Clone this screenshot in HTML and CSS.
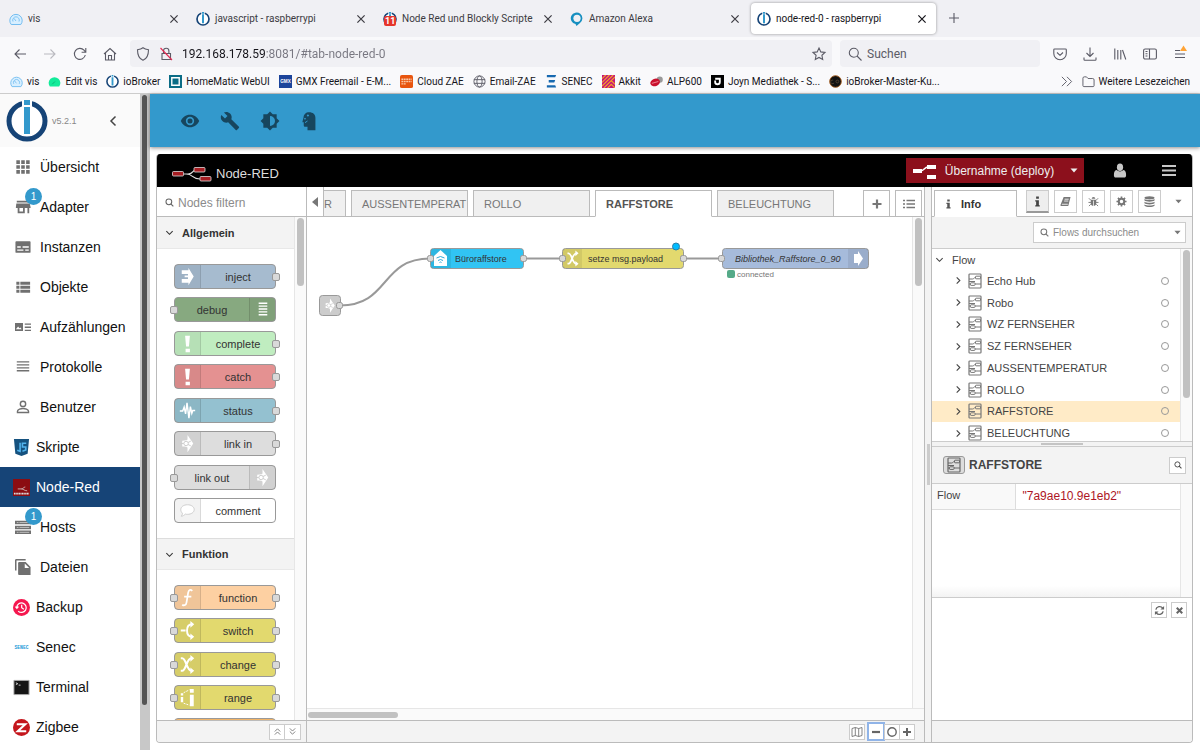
FILE: index.html
```html
<!DOCTYPE html>
<html lang="de">
<head>
<meta charset="utf-8">
<title>node-red-0 - raspberrypi</title>
<link rel="stylesheet" href="styles.css">
</head>
<body>
<svg class="defs" aria-hidden="true">
  <symbol id="x" viewBox="0 0 10 10"><path d="M2 2l6 6M8 2l-6 6" stroke="currentColor" stroke-width="1" fill="none"/></symbol>
  <symbol id="gauge" viewBox="0 0 14 14"><path d="M2.200 12.500a6.200 6.200 0 1 1 9.600 0z" fill="#d8efff" stroke="#74bdf0" stroke-width="1"/><path d="M4 9.500a3.300 3.300 0 1 1 6 0M7 9L4.800 6.200" fill="none" stroke="#74bdf0" stroke-width=".9"/></symbol>
  <symbol id="iob" viewBox="0 0 42 42"><circle cx="21" cy="21" r="18" fill="#fff" stroke="#164477" stroke-width="5"/><path d="M16 0h10v36H16z" fill="#fff"/><path d="M18 0h6v5h-6zM18 7h6v27h-6z" fill="#3399cc"/></symbol>
  <symbol id="glass" viewBox="0 0 14 14"><circle cx="6" cy="6" r="4.500" fill="none" stroke="currentColor" stroke-width="1.600"/><path d="M9 9l4 4" stroke="currentColor" stroke-width="1.800"/></symbol>
  <symbol id="chev" viewBox="0 0 10 10"><path d="M3 1.500l3.500 3.500L3 8.500" fill="none" stroke="currentColor" stroke-width="1.200"/></symbol>
  <symbol id="chevd" viewBox="0 0 10 10"><path d="M1.500 3.500L5 7l3.500-3.500" fill="none" stroke="currentColor" stroke-width="1.200"/></symbol>
  <symbol id="caret" viewBox="0 0 8 5"><path d="M.5.5h7L4 4.500z" fill="currentColor"/></symbol>
  <symbol id="flow" viewBox="0 0 14 16"><rect x="1" y="1" width="12" height="14" rx=".8" fill="none" stroke="currentColor" stroke-width="1.200"/><path d="M1 6h3.500c2 0 1-1.500 3-1.500M1 11h1.500M7 11h6M7 8.500H1" fill="none" stroke="currentColor"/><rect x="7.500" y="3.200" width="5" height="2.600" rx=".6" fill="none" stroke="currentColor"/><rect x="2.500" y="9.800" width="4.500" height="2.600" rx=".6" fill="none" stroke="currentColor"/></symbol>
  <symbol id="arrow2" viewBox="0 0 20 24"><path d="M4 5.500h7V3l5.500 9L11 21v-2.500H4v-4h6.500v-1.800H7V11h3.500V9.500H4z" fill="#fff"/></symbol>
  <symbol id="bang" viewBox="0 0 20 24"><path d="M7.500 4h5l-1 11h-3zM8 17.500h4.500V21H8z" fill="#fff"/></symbol>
  <symbol id="pulse" viewBox="0 0 20 24"><path d="M2 12.500h3l1.500-4 1.500 7L9.500 4l2 16 1.500-12 1.500 7 1-3H18" fill="none" stroke="#fff" stroke-width="1.500"/></symbol>
  <symbol id="link" viewBox="0 0 20 24"><path d="M10 3l6 9-6 9v-4.500c0-1-2-1.500-5.500-1.500V9c3.500 0 5.500-.5 5.500-1.500z" fill="#fff"/><circle cx="8.500" cy="12" r="2.300" fill="none" stroke="#ccc" stroke-width="1"/><path d="M3 12h3M10.500 11l3-1.500M10.500 13l3 1.500" stroke="#ccc" fill="none"/></symbol>
  <symbol id="lines" viewBox="0 0 20 24"><path d="M6 5.500h9M6 8.500h9M6 11.500h9M6 14.500h9M6 17.500h9" stroke="#fff" stroke-width="1.400"/></symbol>
  <symbol id="bubble" viewBox="0 0 20 24"><path d="M10 6c4 0 7 2.200 7 5s-3 5-7 5c-1 0-1.500 0-2.300-.3C6.500 17 5 18 3.500 18c.8-.9 1.300-2 1.200-3.200C3.600 13.800 3 12.500 3 11c0-2.800 3-5 7-5z" fill="#fff" stroke="#ccc"/></symbol>
  <symbol id="fx" viewBox="0 0 20 24"><path d="M15 5c-2-2-3.800-1-4.300 2L9 17c-.5 3-2.500 4-4.500 2.500M6.500 11H14" fill="none" stroke="#fff" stroke-width="1.800"/></symbol>
  <symbol id="switch" viewBox="0 0 20 24"><path d="M3 12h5M15 5.500c-4.500 0-5.500 3-5.500 6.500s1 6.500 5.500 6.500" fill="none" stroke="#fff" stroke-width="2"/><path d="M13 2l4 3.500L13 9zM13 15l4 3.500-4 3.500z" fill="#fff"/></symbol>
  <symbol id="change" viewBox="0 0 20 24"><path d="M3 5.500h1.500c4 0 4.500 13 9.500 13M3 18.500h1.500c4 0 4.500-13 9.500-13" fill="none" stroke="#fff" stroke-width="2.200"/><path d="M13 2l4 3.500L13 9zM13 15l4 3.500-4 3.500z" fill="#fff"/></symbol>
  <symbol id="range" viewBox="0 0 20 24"><path d="M3 7.500h2.500V10H3zM3 11.500h2.500V17H3zM12.500 3h4v4h-4zM12.500 9h4v12h-4z" fill="#fff"/><path d="M6 7l6-3M6 18l6 2" stroke="#fff" stroke-dasharray="2 1"/></symbol>
</svg>

<header class="browser">
  <nav class="tabstrip" aria-label="Browser-Tabs">
    <div class="btab"><svg class="fav"><use href="#gauge"/></svg><span>vis</span><button aria-label="Schließen"><svg><use href="#x"/></svg></button></div>
    <div class="btab"><svg class="fav"><use href="#iob"/></svg><span>javascript - raspberrypi</span><button aria-label="Schließen"><svg><use href="#x"/></svg></button></div>
    <div class="btab"><span class="fav counted"><svg><use href="#iob"/></svg><b>11</b></span><span>Node Red und Blockly Scripte</span><button aria-label="Schließen"><svg><use href="#x"/></svg></button></div>
    <div class="btab"><svg class="fav" viewBox="0 0 14 14"><path d="M5.500 12A5.800 5.800 0 1 1 10 11L6.500 14z" fill="#168fc0"/><circle cx="7" cy="6.300" r="3.600" fill="#f0f0f4"/></svg><span>Amazon Alexa</span><button aria-label="Schließen"><svg><use href="#x"/></svg></button></div>
    <div class="btab current"><svg class="fav"><use href="#iob"/></svg><span>node-red-0 - raspberrypi</span><button aria-label="Schließen"><svg><use href="#x"/></svg></button></div>
    <button class="newtab" aria-label="Neuer Tab"><svg viewBox="0 0 12 12"><path d="M6 1v10M1 6h10" stroke="#5b5b66" stroke-width="1.100"/></svg></button>
  </nav>
  <div class="navbar">
    <div class="navbtns">
      <button aria-label="Zurück"><svg viewBox="0 0 14 14"><path d="M13 7H2M6.500 2.500L2 7l4.500 4.500" /></svg></button>
      <button aria-label="Vor" class="dim"><svg viewBox="0 0 14 14"><path d="M1 7h11M7.500 2.500L12 7l-4.500 4.500"/></svg></button>
      <button aria-label="Neu laden"><svg viewBox="0 0 14 14"><path d="M12.300 8A5.500 5.500 0 1 1 11 3.200L12.500 5M12.800 1v4.200H8.600"/></svg></button>
      <button aria-label="Startseite"><svg viewBox="0 0 14 14"><path d="M1 7l6-5.500L13 7M2.500 6v7h9V6M5.500 13V8.500h3V13"/></svg></button>
    </div>
    <div class="urlbar">
      <svg viewBox="0 0 14 14"><path d="M7 .8C5.500 2 3.500 2.500 1.500 2.700c0 5 1.500 9 5.500 10.600 4-1.600 5.500-5.600 5.500-10.600C10.500 2.500 8.500 2 7 .8z"/></svg>
      <svg viewBox="0 0 14 14"><path d="M3 6.500h8.500v6H3zM4.500 6.500V4a2.700 2.700 0 0 1 5.400 0v2.500"/><path d="M1.500 1l11.500 12" class="red"/></svg>
      <input aria-label="Adresse" value="192.168.178.59:8081/#tab-node-red-0">
      <button aria-label="Lesezeichen"><svg viewBox="0 0 14 14"><path d="M7 1l1.800 3.900 4.200.5-3.100 2.900.8 4.200L7 10.400l-3.700 2.100.8-4.200L1 5.400l4.200-.5z"/></svg></button>
    </div>
    <label class="searchbar"><svg viewBox="0 0 14 14"><circle cx="5.800" cy="5.800" r="4.500"/><path d="M9 9l4.500 4.500"/></svg><input placeholder="Suchen" aria-label="Suchen"></label>
    <div class="navright">
      <button aria-label="Pocket"><svg viewBox="0 0 14 14"><path d="M1.500 2h11c.5 0 .8.3.8.8v3.700a6.200 6.200 0 0 1-12.500 0V2.800c0-.5.300-.8.700-.8zM4 5.500L7 8.300l3-2.800"/></svg></button>
      <button aria-label="Downloads"><svg viewBox="0 0 14 14"><path d="M7 .5v9M3.500 6L7 9.500 10.500 6M1 10.500v2c0 .5.300.8.800.8h10.400c.5 0 .8-.3.800-.8v-2"/></svg></button>
      <button aria-label="Bibliothek"><svg viewBox="0 0 14 14"><path d="M1.800 1.500v11M4.800 3v9.500M7.800 3v9.500M9.500 3l3.300 9.500"/></svg></button>
      <button aria-label="Seitenleiste"><svg viewBox="0 0 14 14"><rect x=".6" y="2" width="12.800" height="10" rx="1.500"/><path d="M6.500 2v10M2.500 4.500h2M2.500 6.800h2M2.500 9h2"/></svg></button>
      <button aria-label="Menü"><svg viewBox="0 0 14 14"><path d="M2 3.500h5M2 7h10M2 10.500h10"/><path d="M10.500-1.500L14 4H7z" fill="#ffa436" stroke="none"/></svg></button>
    </div>
  </div>
  <nav class="bookmarks" aria-label="Lesezeichen">
    <a href="#"><svg><use href="#gauge"/></svg>vis</a>
    <a href="#"><svg viewBox="0 0 14 14"><path d="M2 12.500A6.300 6.300 0 1 1 12 12.500z" fill="#12eb9a"/><path d="M4.500 10l3-3" stroke="#0caf77"/></svg>Edit vis</a>
    <a href="#"><svg><use href="#iob"/></svg>ioBroker</a>
    <a href="#"><svg viewBox="0 0 14 14"><path d="M0 0h14v14H0z" fill="#0b6c86"/><path d="M3 3h8v8H3z" fill="#0b6c86" stroke="#fff" stroke-width="1.500"/></svg>HomeMatic WebUI</a>
    <a href="#"><svg viewBox="0 0 14 14"><path d="M0 0h14v14H0z" fill="#1c449b"/><text x="7" y="9" text-anchor="middle" class="fav-gmx">GMX</text></svg>GMX Freemail - E-M...</a>
    <a href="#"><svg viewBox="0 0 14 14"><rect width="14" height="14" rx="2" fill="#e8550f"/><path d="M1.500 4.500h11M1.500 7h11M1.500 9.500h5" stroke="#f9c9a8" stroke-width="1.500" stroke-dasharray="2 .6"/></svg>Cloud ZAE</a>
    <a href="#"><svg viewBox="0 0 14 14" class="line"><circle cx="7" cy="7" r="6"/><ellipse cx="7" cy="7" rx="2.800" ry="6"/><path d="M1 5h12M1 9h12"/></svg>Email-ZAE</a>
    <a href="#"><svg viewBox="0 0 14 14"><path d="M2 0h10l-1 2.500H2zM4 5.500h7L10 8H4zM2 11h9l1 2.500H2z" fill="#1769b0"/></svg>SENEC</a>
    <a href="#"><svg viewBox="0 0 14 14"><path d="M0 0h14v14H0z" fill="#c4157d"/><path d="M0 4l4-4M0 8l8-8M0 12l12-12M2 14L14 2M6 14l4-4 4 4M10 6l4 4" stroke="#f5a623" stroke-width="1.200" fill="none"/></svg>Akkit</a>
    <a href="#"><svg viewBox="0 0 14 14"><circle cx="10.500" cy="5" r="3.300" fill="#999"/><ellipse cx="5.500" cy="8" rx="5.300" ry="4" fill="#c9102d" transform="rotate(-20 5.500 8)"/><path d="M2 9l7-2" stroke="#f08b98"/></svg>ALP600</a>
    <a href="#"><svg viewBox="0 0 14 14"><path d="M0 0h14v14H0z" fill="#000"/><path d="M4.500 4h5v3.500a2.500 2.500 0 0 1-5 0V6" fill="none" stroke="#fff" stroke-width="2"/></svg>Joyn Mediathek - S...</a>
    <a href="#"><svg viewBox="0 0 14 14"><circle cx="7" cy="7" r="6.300" fill="#111" stroke="#a65f22"/><path d="M4.500 5.500a2 2 0 1 0 1 3M7.500 7a1.500 1.500 0 1 0 3 0 1.500 1.500 0 1 0-3 0" stroke="#51402f" fill="none"/></svg>ioBroker-Master-Ku...</a>
    <button class="more" aria-label="Weitere"><svg viewBox="0 0 14 14" class="line"><path d="M2 2l5 5-5 5M7.500 2l5 5-5 5"/></svg></button>
    <a href="#"><svg viewBox="0 0 14 14" class="line"><path d="M1 11.500v-8c0-1 .5-1.500 1.500-1.500h2.300l1.700 1.800h5c1 0 1.500.5 1.500 1.500v6.200c0 .6-.4 1-1 1H2c-.6 0-1-.4-1-1z"/></svg>Weitere Lesezeichen</a>
  </nav>
</header>

<div class="app">
  <aside class="side">
    <div class="side-head"><svg class="logo"><use href="#iob"/></svg><span>v5.2.1</span><button aria-label="Einklappen"><svg viewBox="0 0 10 12"><path d="M7.500 1.500L3 6l4.500 4.500" fill="none" stroke="#444" stroke-width="1.500"/></svg></button></div>
    <nav class="menu">
      <a href="#"><svg viewBox="0 0 18 18"><path d="M1.500 1.500h4v4h-4zM7 1.500h4v4H7zM12.500 1.500h4v4h-4zM1.500 7h4v4h-4zM7 7h4v4H7zM12.500 7h4v4h-4zM1.500 12.500h4v4h-4zM7 12.500h4v4H7zM12.500 12.500h4v4h-4z"/></svg>Übersicht</a>
      <a href="#"><svg viewBox="0 0 18 18"><path d="M2 2h14v2H2zM1.500 5h15l1 4v1H16v6h-2v-6h-3v6H3v-6H1V9zM5 10v4h4v-4z" fill-rule="evenodd"/></svg>Adapter<b class="badge">1</b></a>
      <a href="#"><svg viewBox="0 0 18 18"><path d="M1.500 2.500h15c.6 0 1 .4 1 1v11c0 .6-.4 1-1 1h-15c-.6 0-1-.4-1-1v-11c0-.6.4-1 1-1z"/><path d="M2.500 9h4M8.500 9h7M2.500 12.500h7M11.500 12.500h4" stroke="#fff" stroke-width="1.500"/></svg>Instanzen</a>
      <a href="#"><svg viewBox="0 0 18 18"><path d="M1.500 3h3.500v3.500H1.500zM6 3h11v3.500H6zM1.500 7.500h3.500v3.500H1.500zM6 7.500h11v3.500H6zM1.500 12h3.500v3.500H1.500zM6 12h11v3.500H6z"/></svg>Objekte</a>
      <a href="#"><svg viewBox="0 0 18 18"><path d="M0 4.500h9v9H0z"/><path d="M1 11.500l2.500-3 1.500 2 1-1 1.500 2z" fill="#fff"/><path d="M11 5h7v1.500h-7zM11 8.500h7V10h-7zM11 12h7v1.500h-7z"/></svg>Aufzählungen</a>
      <a href="#"><svg viewBox="0 0 18 18"><path d="M2 2.500h14V4H2zM2 5.800h14v1.500H2zM2 9.200h14v1.500H2zM2 12.500h14V14H2z"/></svg>Protokolle</a>
      <a href="#"><svg viewBox="0 0 18 18"><circle cx="9" cy="5.500" r="3" fill="none" stroke="#707070" stroke-width="1.600"/><path d="M2.800 15.200v-1.500c0-2 4-3 6.200-3s6.200 1 6.200 3v1.500z" fill="none" stroke="#707070" stroke-width="1.600"/></svg>Benutzer</a>
      <a href="#" class="adapter"><svg viewBox="0 0 18 18"><path d="M1 0h16l-1.500 15.500L9 18l-6.500-2.500z" fill="#15527f"/><path d="M7.500 4v9l-3-1.200M14 4.500h-4v4h3.500v3.200L10 13" fill="none" stroke="#52b3ec" stroke-width="1.700"/></svg>Skripte</a>
      <a href="#" class="adapter active"><svg viewBox="0 0 18 18"><path d="M0 0h18v18H0z" fill="#8b0d12"/><path d="M5 10.500h4c2 0 2-2 4-2M9 10.500c2 0 3 2 6 2" stroke="#ddd" fill="none" stroke-width=".8"/><path d="M1 15.500h16" stroke="#ddd" stroke-width="2" stroke-dasharray="1.300 .4"/></svg>Node-Red</a>
      <a href="#"><svg viewBox="0 0 18 18"><path d="M0 2h18v4H0zM0 7.500h18v4H0zM0 13h18v4H0z"/><path d="M2 4h2M2 9.500h2M2 15h2M5 4h11M5 9.500h11M5 15h11" stroke="#ddd" stroke-width=".8"/></svg>Hosts<b class="badge">1</b></a>
      <a href="#"><svg viewBox="0 0 18 18"><path d="M0 1.500C0 .7.700 0 1.500 0H12v1.700H1.700V13H0z"/><path d="M5 3.500h7l5.500 5.500v9H5c-1 0-1.500-.6-1.500-1.500V5c0-.9.600-1.500 1.500-1.500z"/><path d="M11 5v5h5z" fill="#fff"/></svg>Dateien</a>
      <a href="#" class="adapter"><svg viewBox="0 0 18 18"><circle cx="9" cy="9" r="9" fill="#f5184f"/><path d="M4 9a5 5 0 1 1 1.500 3.800M9.200 6v3.300l2.300 1.500M2.600 8l1.500 1.800L5.800 8" fill="none" stroke="#fff" stroke-width="1.300"/></svg>Backup</a>
      <a href="#" class="adapter"><svg viewBox="0 0 18 18"><text x="9" y="11" text-anchor="middle" class="fav-senec">SENEC</text></svg>Senec</a>
      <a href="#" class="adapter"><svg viewBox="0 0 18 18"><path d="M1 1.500h16v15H1z" fill="#151515" stroke="#aaa" stroke-width="1"/><path d="M3 4l2 1-2 1M6 6.500h2" stroke="#fff" fill="none" stroke-width=".8"/></svg>Terminal</a>
      <a href="#" class="adapter"><svg viewBox="0 0 18 18"><circle cx="9" cy="9" r="9" fill="#c4161c"/><path d="M4 5.500h9l-8 7.500h9" fill="none" stroke="#fff" stroke-width="2.200"/></svg>Zigbee</a>
    </nav>
  </aside>
  <div class="track"><i></i></div>
  <main>
    <div class="toolbar">
      <button aria-label="Ansicht"><svg viewBox="0 0 24 24"><path d="M12 4.500C7 4.500 2.700 7.600 1 12c1.700 4.400 6 7.500 11 7.500s9.300-3.100 11-7.500c-1.700-4.400-6-7.500-11-7.500zM12 17a5 5 0 1 1 0-10 5 5 0 0 1 0 10zm0-8a3 3 0 1 0 0 6 3 3 0 0 0 0-6z"/></svg></button>
      <button aria-label="Einstellungen"><svg viewBox="0 0 24 24"><path d="M22.700 19l-9.100-9.100c.9-2.300.4-5-1.500-6.900-2-2-5-2.400-7.400-1.300L9 6 6 9 1.600 4.700C.4 7.100.900 10.100 2.900 12.100c1.900 1.900 4.600 2.400 6.900 1.500l9.100 9.100c.4.400 1 .4 1.400 0l2.300-2.300c.5-.4.5-1.100.1-1.400z"/></svg></button>
      <button aria-label="Farbschema"><svg viewBox="0 0 24 24"><path d="M20 15.300L23.300 12 20 8.700V4h-4.700L12 .7 8.700 4H4v4.700L.7 12 4 15.300V20h4.700l3.300 3.300 3.300-3.300H20zM12 18V6a6 6 0 1 1 0 12z"/></svg></button>
      <button aria-label="Experte"><svg viewBox="0 0 24 24"><path d="M11 1.500c-4 0-6.500 2.500-6.700 6L3 12.500c-.2.700 0 1 .7 1h.8V17c0 1.200.6 2 1.800 2H9v4h9.500V8c0-4-3-6.500-7.500-6.500z"/><path d="M9.500 4l1.500 1.500L9.500 7 8 5.500zM6 8l1.300 1.300L6 10.600 4.700 9.300z" fill="#39c"/><path d="M6 14l3-2" stroke="#39c" stroke-width="1.200"/></svg></button>
    </div>
    <div class="frame">
    <section class="editor">
      <header class="nr-head">
        <svg class="nr-logo" viewBox="0 0 40 16"><path d="M12 8h4c6 0 4-4 8-4M14 8c8 0 5 5 14 5" fill="none" stroke="#ddd" stroke-width="1.200"/><g fill="#a61d22" stroke="#ddd" stroke-width=".8"><rect x=".5" y="5.500" width="11" height="4.500" rx="1"/><rect x="22" y="1.500" width="11" height="4.500" rx="1"/><rect x="28" y="10.500" width="11" height="4.500" rx="1"/></g></svg>
        <span class="nr-name">Node-RED</span>
        <button class="deploy"><svg viewBox="0 0 24 16"><path d="M8 8c5 0 4-4 8-4" fill="none" stroke="#fff" stroke-width="1.500"/><path d="M1 6h9v4H1zM15 2h9v4h-9zM15 12h9v4h-9z" fill="#fff"/></svg><span>Übernahme (deploy)</span><svg class="car"><use href="#caret"/></svg></button>
        <button class="hbtn" aria-label="Benutzer"><svg viewBox="0 0 14 16"><ellipse cx="7" cy="4.500" rx="3.300" ry="4"/><path d="M3.500 7.500C5 9.500 9 9.500 10.500 7.500 13 8 13.500 10 13.500 13c0 1.500-.8 2.500-2 2.500h-9c-1.200 0-2-1-2-2.500 0-3 .5-5 3-5.500z"/></svg></button>
        <button class="hbtn" aria-label="Menü"><svg viewBox="0 0 14 14"><path d="M0 1.500h14v2H0zM0 6h14v2H0zM0 10.500h14v2H0z"/></svg></button>
      </header>
      <div class="panes">
        <section class="palette">
          <label class="filter"><svg><use href="#glass"/></svg><input placeholder="Nodes filtern" aria-label="Nodes filtern"></label>
          <div class="pal-scroll">
            <div class="pal-body">
              <button class="cat"><svg><use href="#chevd"/></svg>Allgemein</button>
              <div class="nodes eight">
                <div class="node c-inject"><svg><use href="#arrow2"/></svg><span>inject</span><i class="out"></i></div>
                <div class="node flip c-debug"><svg><use href="#lines"/></svg><span>debug</span><i class="in"></i></div>
                <div class="node c-complete"><svg><use href="#bang"/></svg><span>complete</span><i class="out"></i></div>
                <div class="node c-catch"><svg><use href="#bang"/></svg><span>catch</span><i class="out"></i></div>
                <div class="node c-status"><svg><use href="#pulse"/></svg><span>status</span><i class="out"></i></div>
                <div class="node c-link"><svg><use href="#link"/></svg><span>link in</span><i class="out"></i></div>
                <div class="node flip c-link"><svg><use href="#link"/></svg><span>link out</span><i class="in"></i></div>
                <div class="node c-comment"><svg><use href="#bubble"/></svg><span>comment</span></div>
              </div>
              <button class="cat second"><svg><use href="#chevd"/></svg>Funktion</button>
              <div class="nodes five">
                <div class="node c-function"><svg><use href="#fx"/></svg><span>function</span><i class="in"></i><i class="out"></i></div>
                <div class="node c-yellow"><svg><use href="#switch"/></svg><span>switch</span><i class="in"></i><i class="out"></i></div>
                <div class="node c-yellow"><svg><use href="#change"/></svg><span>change</span><i class="in"></i><i class="out"></i></div>
                <div class="node c-yellow"><svg><use href="#range"/></svg><span>range</span><i class="in"></i><i class="out"></i></div>
                <div class="node c-template"></div>
              </div>
            </div>
            <div class="vbar"><i class="short"></i></div>
          </div>
          <footer class="pfoot"><button aria-label="Alle einklappen"><svg viewBox="0 0 10 10"><path d="M2 5l3-3 3 3M2 8.500l3-3 3 3"/></svg></button><button aria-label="Alle ausklappen"><svg viewBox="0 0 10 10"><path d="M2 1.500l3 3 3-3M2 5l3 3 3-3"/></svg></button></footer>
        </section>
        <section class="work">
          <div class="wtabs">
            <button class="scroll" aria-label="Zurück"><svg viewBox="0 0 8 12"><path d="M7 1v10L1 6z" fill="#777"/></svg></button>
            <div class="strip">
              <button class="wtab part">R</button><button class="wtab">AUSSENTEMPERAT</button><button class="wtab">ROLLO</button><button class="wtab on">RAFFSTORE</button><button class="wtab">BELEUCHTUNG</button>
            </div>
            <button class="wbtn" aria-label="Hinzufügen"><svg viewBox="0 0 10 10"><path d="M5 .5v9M.5 5h9" stroke="#777" stroke-width="2.200"/></svg></button>
            <button class="wbtn" aria-label="Liste"><svg viewBox="0 0 12 10" class="wide"><path d="M0 1.500h2M0 5h2M0 8.500h2M3.500 1.500H12M3.500 5H12M3.500 8.500H12" stroke="#777" stroke-width="1.500"/></svg></button>
          </div>
          <div class="stage">
            <svg class="canvas" aria-label="Flow">
              <g fill="none" stroke="#999" stroke-width="2"><path d="M33 88.500C83 88.500 73 41.500 123 41.500M217 41.500H256M377 41.500H415"/></g>
              <g stroke="#999">
                <rect x="12.500" y="78.500" width="21" height="20" rx="3" fill="#ccc"/>
                <rect x="123.500" y="31.500" width="93" height="20" rx="3" fill="#31c4f3"/>
                <rect x="255.500" y="31.500" width="121" height="20" rx="3" fill="#e2d96e"/>
                <rect x="415.500" y="31.500" width="146" height="20" rx="3" fill="#a6bbdb"/>
              </g>
              <path d="M124 32h20v19h-20zM256 32h19v19h-19zM541 32h20v19h-20z" fill="#000" fill-opacity=".07"/>
              <use href="#link" x="14" y="79" width="18" height="19"/>
              <path d="M127 39l6.500-6 6.500 6v10h-13z" fill="#fff"/><path d="M129.500 41q4-3 8 0M131 43.500q2.500-2 5 0M132.500 45.500q1-1 2 0" fill="none" stroke="#31a9d8"/>
              <use href="#change" x="256" y="32" width="20" height="19"/>
              <path d="M547 37h4v-3l5 7.500-5 7.500v-3h-4z" fill="#fff"/>
              <g fill="#d9d9d9" stroke="#999"><rect x="29.500" y="85.500" width="6" height="6" rx="2"/><rect x="120.500" y="38.500" width="6" height="6" rx="2"/><rect x="213.500" y="38.500" width="6" height="6" rx="2"/><rect x="252.500" y="38.500" width="6" height="6" rx="2"/><rect x="373.500" y="38.500" width="6" height="6" rx="2"/><rect x="411.500" y="38.500" width="6" height="6" rx="2"/></g>
              <circle cx="369" cy="29.500" r="3.500" fill="#00bcff" stroke="#2a7fa8"/>
              <rect x="420" y="53" width="8" height="8" rx="2" fill="#5a8"/>
              <g class="nlabel"><text x="148" y="45">Büroraffstore</text><text x="281" y="45">setze msg.payload</text><text x="428" y="45" class="it">Bibliothek_Raffstore_0_90</text></g>
              <text x="430" y="60" class="nstatus">connected</text>
            </svg>
            <div class="vbar"><i class="short"></i></div>
            <div class="hbar"><i></i></div>
          </div>
          <footer class="wfoot">
            <button aria-label="Navigator"><svg viewBox="0 0 12 12"><path d="M1 2.500l3.300-1 3.400 1 3.300-1v8l-3.300 1-3.400-1-3.300 1zM4.300 1.500v8M7.700 2.500v8"/></svg></button>
            <span class="zooms"><button class="focus" aria-label="Verkleinern"><svg viewBox="0 0 12 12"><path d="M2 6h8" stroke-width="2.200"/></svg></button><button aria-label="Zurücksetzen"><svg viewBox="0 0 12 12"><circle cx="6" cy="6" r="4.200" stroke-width="1.400"/></svg></button><button aria-label="Vergrößern"><svg viewBox="0 0 12 12"><path d="M2 6h8M6 2v8" stroke-width="2"/></svg></button></span>
          </footer>
        </section>
        <div class="sep"><i></i></div>
        <aside class="info">
          <div class="itabs">
            <button class="itab"><svg viewBox="0 0 8 12"><path d="M2.500.5h3v2.500h-3zM1.500 4.500h4V10h1v1.500h-5V10h1V6h-1z" fill="#555"/></svg>Info</button>
            <button class="ib sel" aria-label="Info"><svg viewBox="-2 0 12 12"><path d="M2.500.5h3v2.500h-3zM1.500 4.500h4V10h1v1.500h-5V10h1V6h-1z"/></svg></button>
            <button class="ib" aria-label="Hilfe"><svg viewBox="0 0 12 12"><path d="M4 1h7.500L9 11H1.500c-1 0-1.200-1-.8-1.800z"/><path d="M5 3.500h4.500M4.500 5.500H9M2 9h6.500" stroke="#fff" stroke-width=".9"/></svg></button>
            <button class="ib" aria-label="Debug"><svg viewBox="0 0 12 12"><path d="M4 3a2 2 0 0 1 4 0zM3 4h6v4c0 2-1.500 3-3 3s-3-1-3-3z"/><path d="M1 2.500l2 2M11 2.500l-2 2M.5 7h3M11.500 7h-3M1 11l2-2M11 11L9 9" stroke="#777"/><path d="M6 5v6" stroke="#fff" stroke-width=".8"/></svg></button>
            <button class="ib" aria-label="Konfiguration"><svg viewBox="0 0 12 12"><circle cx="6" cy="6" r="3" fill="none" stroke="#777" stroke-width="2.200"/><path d="M6 .5v2M6 9.500v2M.5 6h2M9.500 6h2M2.100 2.100l1.500 1.500M8.400 8.400l1.500 1.500M9.900 2.100L8.400 3.600M3.600 8.400L2.100 9.900" stroke="#777" stroke-width="1.800"/></svg></button>
            <button class="ib" aria-label="Kontext"><svg viewBox="0 0 12 12"><ellipse cx="6" cy="2" rx="5.500" ry="1.800"/><path d="M.5 3.200c2 1.600 9 1.600 11 0v1.800c-2 1.600-9 1.600-11 0zM.5 6.200c2 1.600 9 1.600 11 0V8c-2 1.600-9 1.600-11 0zM.5 9.200c2 1.600 9 1.600 11 0v1.300c-2 1.900-9 1.900-11 0z"/></svg></button>
            <button class="more" aria-label="Mehr"><svg><use href="#caret"/></svg></button>
          </div>
          <div class="isearch"><label><svg><use href="#glass"/></svg><input placeholder="Flows durchsuchen" aria-label="Flows durchsuchen"><svg class="car"><use href="#caret"/></svg></label></div>
          <div class="tree-wrap">
            <div class="tree">
              <div class="root"><svg class="ch"><use href="#chevd"/></svg>Flow</div>
              <div class="rows">
                <div><svg class="ch"><use href="#chev"/></svg><svg class="fl"><use href="#flow"/></svg><span>Echo Hub</span><i></i></div>
                <div><svg class="ch"><use href="#chev"/></svg><svg class="fl"><use href="#flow"/></svg><span>Robo</span><i></i></div>
                <div><svg class="ch"><use href="#chev"/></svg><svg class="fl"><use href="#flow"/></svg><span>WZ FERNSEHER</span><i></i></div>
                <div><svg class="ch"><use href="#chev"/></svg><svg class="fl"><use href="#flow"/></svg><span>SZ FERNSEHER</span><i></i></div>
                <div><svg class="ch"><use href="#chev"/></svg><svg class="fl"><use href="#flow"/></svg><span>AUSSENTEMPERATUR</span><i></i></div>
                <div><svg class="ch"><use href="#chev"/></svg><svg class="fl"><use href="#flow"/></svg><span>ROLLO</span><i></i></div>
                <div class="hit"><svg class="ch"><use href="#chev"/></svg><svg class="fl"><use href="#flow"/></svg><span>RAFFSTORE</span><i></i></div>
                <div><svg class="ch"><use href="#chev"/></svg><svg class="fl"><use href="#flow"/></svg><span>BELEUCHTUNG</span><i></i></div>
              </div>
            </div>
            <div class="vbar"><i></i></div>
          </div>
          <div class="hsep"><i></i></div>
          <div class="ihead"><span class="ficon"><svg><use href="#flow"/></svg></span><b>RAFFSTORE</b><button aria-label="Suchen"><svg><use href="#glass"/></svg></button></div>
          <div class="props"><table><tbody><tr><th scope="row">Flow</th><td>"7a9ae10.9e1eb2"</td></tr></tbody></table><div class="vbar"></div></div>
          <div class="tips"><button aria-label="Neu laden"><svg viewBox="0 0 12 12"><path d="M2 5a4.200 4.200 0 0 1 7.500-1.500M10 7a4.200 4.200 0 0 1-7.500 1.500" fill="none" stroke="#666" stroke-width="1.500"/><path d="M11 1v4H7zM1 11V7h4z" fill="#666"/></svg></button><button aria-label="Schließen"><svg viewBox="0 0 12 12"><path d="M3 3l6 6M9 3l-6 6" stroke="#666" stroke-width="2.200"/></svg></button></div>
          <footer class="ifoot"></footer>
        </aside>
      </div>
    </section>
    </div>
  </main>
</div>
</body>
</html>
```
FILE: styles.css
```css
* { box-sizing: border-box; }
html, body { height: 100%; }
body { margin: 0; display: flex; flex-direction: column; overflow: hidden; background: #fff; font-family: "Liberation Sans", Arial, sans-serif; font-size: 11px; color: #444; }
button { border: 0; padding: 0; margin: 0; background: none; font: inherit; color: inherit; display: flex; align-items: center; justify-content: center; }
input { border: 0; padding: 0; margin: 0; background: none; font: inherit; color: inherit; outline: 0; min-width: 0; }
a { color: inherit; text-decoration: none; }
svg { flex: none; display: block; }
.defs { position: absolute; width: 0; height: 0; }

/* browser chrome */
.browser { flex: none; font-family: Roboto, sans-serif; font-size: 10px; color: #15141a; background: #f9f9fb; border-bottom: 1px solid #ccc; }
.tabstrip { display: flex; gap: 2px; height: 37px; padding: 3px 3px 4px; background: #f0f0f4; }
.btab { display: flex; align-items: center; gap: 5px; width: 185px; height: 31px; padding: 0 8px 0 6px; border-radius: 4px; color: #3c3b42; white-space: nowrap; }
.btab.current { background: #fff; box-shadow: 0 0 3px rgba(0,0,0,.4); color: #15141a; }
.btab .fav { width: 14px; height: 14px; }
.btab > span:not(.fav) { flex: 1; }
.btab button svg { width: 12px; height: 12px; }
.counted { position: relative; }
.counted svg { width: 14px; height: 14px; }
.counted b { position: absolute; left: 1px; top: 4px; padding: 0 1px; border-radius: 2px; background: #e5352b; color: #fff; font-size: 9px; line-height: 10px; }
.newtab { width: 32px; }
.newtab svg { width: 12px; height: 12px; }
.navbar { display: flex; align-items: center; height: 33px; padding-right: 10px; }
.navbar svg { width: 14px; height: 14px; fill: none; stroke: #5b5b66; stroke-width: 1.1; overflow: visible; }
.navbtns { display: flex; gap: 16px; width: 130px; padding-left: 13px; }
.dim { opacity: .4; }
.urlbar { display: flex; align-items: center; gap: 9px; flex: 1; height: 27px; padding: 0 6px; border-radius: 4px; background: #f0f0f4; }
.urlbar .red { stroke: #e22850; }
.urlbar input { flex: 1; font-size: 12px; color: transparent; background: linear-gradient(90deg, #15141a 83px, #777680 83px); -webkit-background-clip: text; background-clip: text; }
.searchbar { display: flex; align-items: center; gap: 5px; width: 200px; height: 27px; margin: 0 13px 0 8px; padding-left: 8px; border-radius: 4px; background: #f0f0f4; font-size: 12px; }
.searchbar input::placeholder { color: #5b5b66; opacity: 1; }
.navright { display: flex; gap: 16px; padding-right: 3px; }
.bookmarks { display: flex; align-items: center; gap: 9px; height: 23px; padding: 0 10px; white-space: nowrap; }
.bookmarks a { display: flex; align-items: center; gap: 4px; }
.bookmarks svg { width: 13px; height: 13px; }
.bookmarks .line { fill: none; stroke: #5b5b66; }
.bookmarks .more { margin-left: auto; }
.fav-gmx { font: bold 5px "Liberation Sans", Arial, sans-serif; fill: #fff; }
.fav-senec { font: bold 5px "Liberation Mono", monospace; fill: #1d9bd8; }

/* application frame */
.app { display: flex; flex: 1; min-height: 0; }
.side { width: 140px; flex: none; display: flex; flex-direction: column; overflow: hidden; }
.side-head { display: flex; align-items: center; gap: 4px; height: 53px; flex: none; padding: 0 22px 0 6px; background: #fafafa; color: #888; font-size: 9px; }
.logo { width: 42px; height: 42px; }
.side-head button { margin-left: auto; }
.side-head button svg { width: 10px; height: 12px; }
.menu a { position: relative; display: flex; align-items: center; gap: 9px; height: 40px; padding-left: 15px; font-size: 14px; color: #111; }
.menu svg { width: 16px; height: 16px; fill: #707070; }
.menu .adapter { padding-left: 13px; gap: 6px; }
.menu .adapter svg { width: 17px; height: 17px; }
.menu .active { background: #164477; color: #fff; }
.badge { position: absolute; left: 25px; top: 1px; width: 17px; height: 17px; border-radius: 9px; background: #39c; color: #fff; font-size: 10px; font-weight: normal; line-height: 17px; text-align: center; }
.track { width: 10px; flex: none; background: #c8c8c8; padding: 1px 3px 0 2px; }
.track i { display: block; width: 5px; height: 610px; border-radius: 3px; background: #555; }
main { flex: 1; min-width: 0; display: flex; flex-direction: column; }
.toolbar { display: flex; align-items: center; gap: 20px; height: 53px; flex: none; padding-left: 30px; background: #39c; box-shadow: 0 1px 4px rgba(0,0,0,.45); }
.toolbar svg { width: 20px; height: 20px; fill: #17465e; }
.frame { flex: 1; min-height: 0; padding: 7px 7px 7px 6px; display: flex; }

/* Node-RED editor */
.editor { flex: 1; min-width: 0; display: flex; flex-direction: column; border: 1px solid #bbb; border-top: 0; border-radius: 4px; overflow: hidden; }
.nr-head { display: flex; align-items: center; height: 33px; flex: none; padding: 0 16px 0 15px; background: #000; color: #ddd; }
.nr-logo { width: 40px; height: 16px; margin-top: 6px; }
.nr-name { margin: 6px auto 0 4px; font-size: 13px; }
.deploy { gap: 9px; width: 178px; height: 25px; background: #8c101c; color: #eee; font-size: 12px; }
.deploy svg { width: 24px; height: 16px; }
.deploy .car { width: 8px; height: 5px; margin-left: 7px; }
.hbtn { margin-left: 29px; }
.hbtn svg { width: 14px; height: 15px; fill: #c7c7c7; }
.hbtn + .hbtn { margin-left: 35px; }
.panes { flex: 1; min-height: 0; display: flex; }
.vbar { width: 12px; flex: none; padding: 1px 2px; background: #fafafa; border-left: 1px solid #e6e6e6; }
.vbar i { display: block; width: 7px; height: 148px; border-radius: 4px; background: #c1c1c1; }
.vbar .short { height: 68px; }
.palette { width: 150px; flex: none; display: flex; flex-direction: column; border-right: 1px solid #bbb; }
.filter { display: flex; align-items: center; gap: 4px; height: 30px; flex: none; padding: 2px 0 0 8px; border-bottom: 1px solid #bbb; font-size: 12px; color: #666; }
.filter svg { width: 9px; height: 9px; }
input::placeholder { color: #8b8b8b; opacity: 1; }
.filter input { width: 120px; }
.pal-scroll { flex: 1; min-height: 0; display: flex; overflow: hidden; }
.pal-body { flex: 1; overflow: hidden; }
.cat { width: 100%; height: 32px; justify-content: flex-start; gap: 8px; padding-left: 8px; background: #f3f3f3; border-bottom: 1px solid #e8e8e8; color: #333; font-weight: bold; }
.cat svg { width: 9px; height: 9px; }
.cat.second { border-top: 1px solid #ddd; }
.nodes { display: flex; flex-direction: column; justify-content: space-between; padding-left: 17px; margin: 15px 0; }
.eight { height: 259px; }
.five { height: 158px; }
.node { position: relative; display: flex; width: 102px; height: 25px; flex: none; border: 1px solid #999; border-radius: 4px; color: #333; }
.node svg { width: 26px; height: 23px; padding: 0 2px; background: rgba(0,0,0,.05); border-right: 1px solid rgba(0,0,0,.1); }
.node span { flex: 1; text-align: center; line-height: 24px; }
.node.flip { flex-direction: row-reverse; }
.flip svg { border-right: 0; border-left: 1px solid rgba(0,0,0,.1); }
.node i { position: absolute; top: 8px; width: 8px; height: 8px; border: 1px solid #999; border-radius: 2px; background: #d9d9d9; }
.node .in { left: -5px; }
.node .out { right: -5px; }
.c-inject { background: #a6bbcf; }
.c-debug { background: #87a980; }
.c-complete { background: #c0edc0; }
.c-catch { background: #e49191; }
.c-status { background: #94c1d0; }
.c-link { background: #ddd; }
.c-comment { background: #fff; }
.c-function { background: #fdd0a2; }
.c-yellow { background: #e2d96e; }
.c-template { background: #f3b567; }
.pfoot, .wfoot, .ifoot { height: 22px; flex: none; display: flex; align-items: center; justify-content: flex-end; background: #f3f3f3; border-top: 1px solid #bbb; }
.pfoot { padding-right: 5px; }
.pfoot button, .wfoot button { width: 16px; height: 16px; border: 1px solid #ccc; background: #fff; }
.pfoot button + button { border-left: 0; }
.pfoot svg { width: 9px; height: 9px; fill: none; stroke: #777; }
.wfoot svg { width: 12px; height: 12px; fill: none; stroke: #666; stroke-width: .8; }
.work { flex: 1; min-width: 0; display: flex; flex-direction: column; border-right: 1px solid #bbb; }
.wtabs { display: flex; align-items: flex-end; height: 30px; flex: none; padding-right: 2px; border-bottom: 1px solid #bbb; }
.scroll { width: 17px; height: 29px; flex: none; border-right: 1px solid #bbb; }
.scroll svg { width: 8px; height: 12px; }
.strip { flex: 1; min-width: 0; display: flex; gap: 5px; overflow: hidden; margin-bottom: -1px; }
.wtab { width: 117px; height: 27px; flex: none; justify-content: flex-start; padding-left: 10px; border: 1px solid #bbb; background: #f0f0f0; color: #777; white-space: nowrap; }
.wtab.part { width: 22px; padding-left: 0; border-left: 0; }
.wtab.on { background: #fff; border-bottom-color: #fff; color: #555; font-weight: bold; }
.wbtn { width: 27px; height: 26px; flex: none; margin-left: 5px; border: 1px solid #bbb; border-bottom: 0; background: #fff; }
.wbtn svg { width: 10px; height: 10px; }
.wbtn .wide { width: 12px; }
.stage { flex: 1; min-height: 0; display: grid; grid-template: 1fr 12px / 1fr 12px; }
.canvas { width: 100%; height: 100%; }
.hbar { grid-column: 1 / 3; padding: 3px 1px; background: #fafafa; border-top: 1px solid #e6e6e6; }
.hbar i { display: block; width: 90px; height: 6px; border-radius: 3px; background: #c1c1c1; }
.nlabel { font-size: 9px; fill: #333; }
.it { font-style: italic; }
.nstatus { font-size: 8px; fill: #777; }
.wfoot { gap: 2px; padding-right: 9px; }
.zooms { display: flex; align-items: center; }
.zooms button + button { margin-left: -1px; }
.wfoot .focus { width: 18px; height: 19px; border: 2px solid #90b4e8; }
.sep { width: 7px; flex: none; display: flex; align-items: center; justify-content: center; background: #f3f3f3; border-right: 1px solid #bbb; }
.sep i { width: 3px; height: 41px; background: #ccc; }

/* info panel */
.info { width: 260px; flex: none; display: flex; flex-direction: column; }
.itabs { display: flex; align-items: center; gap: 5px; height: 30px; flex: none; padding-left: 2px; border-bottom: 1px solid #bbb; }
.itab { width: 83px; height: 27px; align-self: flex-end; margin: 0 4px -1px 0; justify-content: flex-start; gap: 9px; padding-left: 10px; border: 1px solid #bbb; border-bottom-color: #fff; color: #333; font-weight: bold; }
.itab svg { width: 7px; height: 10px; }
.ib { width: 23px; height: 23px; border: 1px solid #ccc; }
.ib svg { width: 11px; height: 11px; fill: #777; }
.ib.sel { background: #eee; border-bottom: 2px solid #999; }
.ib.sel svg { fill: #444; }
.itabs .more { margin: 0 10px 0 auto; color: #777; }
.itabs .more svg, .isearch .car { width: 7px; height: 5px; }
.isearch { display: flex; justify-content: flex-end; height: 32px; flex: none; padding: 5px 6px; background: #f3f3f3; border-bottom: 1px solid #ccc; }
.isearch label { display: flex; align-items: center; gap: 4px; width: 153px; height: 21px; padding: 0 4px 0 6px; border: 1px solid #ccc; background: #fff; color: #777; font-size: 10px; }
.isearch svg { width: 9px; height: 9px; }
.isearch input { flex: 1; }
.tree-wrap { display: flex; height: 192px; flex: none; overflow: hidden; }
.tree { flex: 1; }
.root { display: flex; align-items: center; gap: 8px; height: 21px; padding-left: 3px; }
.ch { width: 9px; height: 9px; }
.rows { display: flex; flex-direction: column; height: 174px; }
.rows > div { flex: 1; display: flex; align-items: center; padding: 0 11px 0 22px; }
.fl { width: 14px; height: 16px; margin: 0 5px; color: #777; }
.rows span { flex: 1; }
.rows i { width: 8px; height: 8px; border: 1px solid #999; border-radius: 4px; }
.rows .hit { background: #ffebc7; }
.hsep { display: flex; align-items: center; justify-content: center; height: 6px; flex: none; border-top: 1px solid #ccc; border-bottom: 1px solid #ccc; background: #f3f3f3; }
.hsep i { width: 42px; height: 2px; background: #c4c4c4; }
.ihead { display: flex; align-items: center; gap: 4px; height: 37px; flex: none; padding: 0 6px 0 11px; background: #f3f3f3; border-bottom: 1px solid #ccc; font-size: 12px; color: #444; }
.ficon { display: flex; justify-content: center; width: 22px; height: 18px; border: 1px solid #999; border-radius: 3px; background: #ddd; color: #666; }
.ficon svg { width: 14px; height: 16px; }
.ihead button { width: 17px; height: 17px; margin-left: auto; border: 1px solid #ccc; background: #fff; }
.ihead button svg { width: 8px; height: 8px; }
.props { display: flex; align-items: stretch; height: 114px; flex: none; border-bottom: 1px solid #ccc; background: linear-gradient(#fff 90%, #f3f3f3); }
.props table { flex: 1; align-self: flex-start; border-collapse: collapse; table-layout: fixed; width: 100%; }
th, td { height: 25px; padding: 0 7px; text-align: left; border-bottom: 1px solid #ddd; }
th { width: 83px; padding: 0 5px 3px; background: #f9f9f9; border-right: 1px solid #ddd; font-weight: normal; }
td { background: #fff; color: #ad1625; font-size: 12px; }
.tips { flex: 1; display: flex; justify-content: flex-end; align-items: flex-start; gap: 4px; padding: 4px 5px; }
.tips button { width: 16px; height: 16px; border: 1px solid #ccc; }
.tips svg { width: 11px; height: 11px; }
```
